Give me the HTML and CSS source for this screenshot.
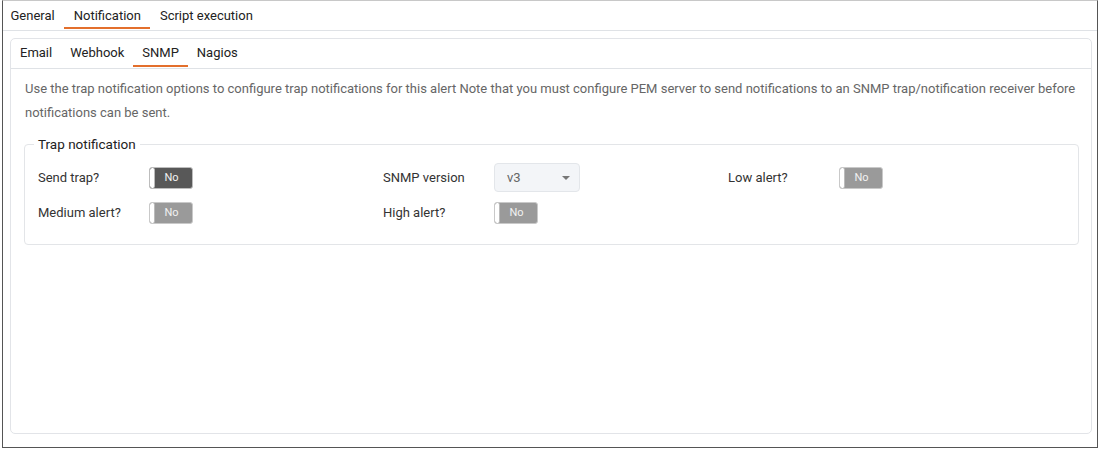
FILE: index.html
```html
<!DOCTYPE html>
<html>
<head>
<meta charset="utf-8">
<link rel="stylesheet" href="styles.css">
</head>
<body>
<div class="frame">
  <div class="tabs top-tabs">
    <div class="tab">General</div>
    <div class="tab active">Notification</div>
    <div class="tab">Script execution</div>
  </div>
  <div class="card">
    <div class="tabs sub-tabs">
      <div class="tab">Email</div>
      <div class="tab">Webhook</div>
      <div class="tab active">SNMP</div>
      <div class="tab">Nagios</div>
    </div>
    <div class="content">
      <p class="desc">Use the trap notification options to configure trap notifications for this alert Note that you must configure PEM server to send notifications to an SNMP trap/notification receiver before notifications can be sent.</p>
      <fieldset class="group">
        <legend>Trap notification</legend>
        <div class="grid">
          <div class="field"><span class="label">Send trap?</span><span class="toggle dark"><span class="knob"></span><span class="val">No</span></span></div>
          <div class="field"><span class="label">SNMP version</span><span class="select"><span class="sel-val">v3</span><span class="caret"></span></span></div>
          <div class="field"><span class="label">Low alert?</span><span class="toggle"><span class="knob"></span><span class="val">No</span></span></div>
          <div class="field"><span class="label">Medium alert?</span><span class="toggle"><span class="knob"></span><span class="val">No</span></span></div>
          <div class="field"><span class="label">High alert?</span><span class="toggle"><span class="knob"></span><span class="val">No</span></span></div>
        </div>
      </fieldset>
    </div>
  </div>
</div>
</body>
</html>
```
FILE: styles.css
```css
* { box-sizing: border-box; }
html, body { margin: 0; padding: 0; background: #fff; }
body {
  font-family: Roboto, "Liberation Sans", sans-serif;
  font-size: 13px;
  color: #222;
  width: 1100px;
  height: 450px;
}
.frame {
  margin: 0 2px;
  height: 448px;
  border: 1px solid #555;
  border-top: 1px solid #c8c8c8;
  display: flex;
  flex-direction: column;
}
.tabs {
  display: flex;
  border-bottom: 1px solid #dfe2e6;
}
.top-tabs {
  height: 30px;
}
.top-tabs .tab:first-child { margin-left: -2px; }
.tab {
  padding: 0 9px;
  display: flex;
  align-items: center;
  position: relative;
  color: #222;
}
.top-tabs .tab { padding: 0 9.5px 1px; }
.tab.active::after {
  content: "";
  position: absolute;
  left: 0; right: 0; bottom: 1px;
  height: 2px;
  background: #e36f2c;
}
.card {
  margin: 7px 5px 13px 7px;
  flex: 1;
  border: 1px solid #e2e4e8;
  border-radius: 5px;
}
.sub-tabs {
  height: 30px;
}
.sub-tabs .tab { padding: 0 9px 2px; }
.content {
  padding: 8px 12px 0 13px;
}
.desc {
  margin: 0;
  padding-left: 1px;
  line-height: 24px;
  color: #666;
}
.group {
  margin: 11px 0 0 0;
  min-width: 0;
  border: 1px solid #e3e5e8;
  border-radius: 4px;
  padding: 11px 13px 17px;
}
.group legend {
  font-size: 13.5px;
  color: #222;
  padding: 0 4px;
  margin-left: -4px;
}
.grid {
  display: grid;
  grid-template-columns: 345px 345px minmax(0, 1fr);
  grid-auto-rows: 29px;
  row-gap: 6px;
}
.field {
  display: flex;
  align-items: center;
}
.label {
  width: 111px;
  color: #333;
}
.toggle {
  width: 44px;
  height: 22px;
  border: 1px solid #c9c9c9;
  border-radius: 3px;
  background: #9a9a9a;
  display: flex;
  overflow: hidden;
}
.toggle.dark { background: #585858; border-color: #bdbdbd; }
.knob {
  width: 5px;
  background: #fff;
  border-right: 1px solid #bbb;
  border-radius: 2px;
}
.val {
  flex: 1;
  display: flex;
  align-items: center;
  justify-content: center;
  color: #f2f2f2;
  font-size: 11px;
  padding-right: 4px;
}
.select {
  width: 86px;
  height: 29px;
  background: #f3f5f8;
  border: 1px solid #e3e6ea;
  border-radius: 4px;
  display: flex;
  align-items: center;
  justify-content: space-between;
  padding: 0 9px 0 12px;
}
.sel-val { color: #666; }
.caret {
  width: 0; height: 0;
  border-left: 4px solid transparent;
  border-right: 4px solid transparent;
  border-top: 4px solid #777;
}
```
